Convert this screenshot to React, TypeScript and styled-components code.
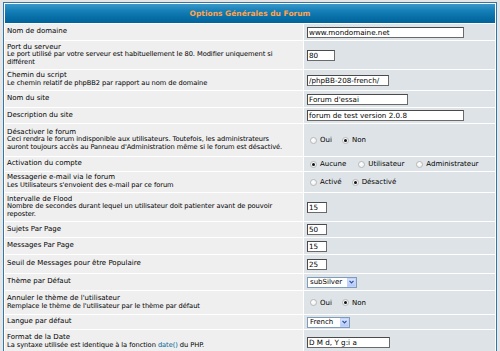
import React from "react";
import styled, { createGlobalStyle } from "styled-components";

const GlobalStyle = createGlobalStyle`
  body {
    margin: 2px 3px;
    background: #e5e5e5;
    font-family: "DejaVu Sans", Verdana, sans-serif;
  }
`;

const ForumLine = styled.div`
  display: grid;
  grid-template-columns: 298px 1fr;
  gap: 1px;
  padding: 1px;
  background: #ffffff;
  border: 1px solid #2f78a8;
  box-sizing: border-box;
  width: 494px;
`;

const HeaderCell = styled.div`
  grid-column: 1 / -1;
  height: 19px;
  display: flex;
  align-items: center;
  justify-content: center;
  background: linear-gradient(#3b97c8 0%, #1680b8 35%, #086ea6 70%, #00649c 100%);
  color: #ffa34f;
  font-size: 7.5px;
  font-weight: bold;
`;

const LabelCell = styled.div<{ $h: number }>`
  height: ${(p) => p.$h}px;
  background: #efefef;
  display: flex;
  flex-direction: column;
  justify-content: center;
  padding: 0 2px 0 2px;
  color: #000;
`;

const ValueCell = styled.div<{ $h: number }>`
  height: ${(p) => p.$h}px;
  background: #dee3e7;
  display: flex;
  align-items: center;
  padding-left: 3px;
`;

const Title = styled.span`
  font-size: 7px;
  line-height: 7.6px;
`;

const Explain = styled.span`
  font-size: 6.7px;
  line-height: 7.6px;
  letter-spacing: -0.07px;
`;

const Link = styled.a`
  color: #006699;
  text-decoration: none;
`;

const TextInput = styled.input<{ $w: number }>`
  width: ${(p) => p.$w}px;
  height: 11px;
  box-sizing: border-box;
  padding: 0 1px;
  border: 1px solid #4a4a4a;
  border-right-color: #6a6a6a;
  border-bottom-color: #6a6a6a;
  background: #fff;
  font: 7.2px "DejaVu Sans", Verdana, sans-serif;
  color: #000;
  outline: none;
`;

const RadioGroup = styled.div<{ $gap: number }>`
  display: flex;
  align-items: center;
  gap: ${(p) => p.$gap}px;
  padding-left: 3px;
`;

const RadioItem = styled.label`
  display: flex;
  align-items: center;
  gap: 3px;
  font-size: 7px;
  color: #000;
`;

const Dot = styled.span<{ $on: boolean }>`
  width: 7px;
  height: 7px;
  border-radius: 50%;
  box-sizing: border-box;
  border: 1px solid #b9b9b9;
  background: radial-gradient(circle at 35% 35%, #ffffff 0%, #ececec 100%);
  display: flex;
  align-items: center;
  justify-content: center;
  &::after {
    content: "";
    width: 3px;
    height: 3px;
    border-radius: 50%;
    background: ${(p) => (p.$on ? "#111" : "transparent")};
  }
`;

const SelectBox = styled.div<{ $w: number }>`
  width: ${(p) => p.$w}px;
  height: 11px;
  box-sizing: border-box;
  border: 1px solid #7f9db9;
  background: #fff;
  display: flex;
  align-items: center;
  justify-content: space-between;
  font-size: 7px;
  padding-left: 2px;
  color: #000;
`;

const ArrowBtn = styled.span`
  width: 9px;
  height: 9px;
  box-sizing: border-box;
  background: linear-gradient(#d8e4fe, #b5c9f7);
  border: 1px solid #c3d3fd;
  display: flex;
  align-items: center;
  justify-content: center;
`;

type Field = {
  title: string;
  explain?: React.ReactNode;
  h: number;
  value: React.ReactNode;
};

const Radios = ({ items, checked, gap }: { items: string[]; checked: number; gap: number }) => (
  <RadioGroup $gap={gap}>
    {items.map((t, i) => (
      <RadioItem key={t}>
        <Dot $on={i === checked} />
        {t}
      </RadioItem>
    ))}
  </RadioGroup>
);

const Select = ({ value, w }: { value: string; w: number }) => (
  <SelectBox $w={w}>
    {value}
    <ArrowBtn>
      <svg width="5" height="4" viewBox="0 0 5 4">
        <path d="M0.5 0.8 L2.5 2.8 L4.5 0.8" stroke="#2d4fa0" strokeWidth="1.2" fill="none" />
      </svg>
    </ArrowBtn>
  </SelectBox>
);

const fields: Field[] = [
  { title: "Nom de domaine", h: 16, value: <TextInput $w={157} defaultValue="www.mondomaine.net" /> },
  {
    title: "Port du serveur",
    explain: "Le port utilisé par votre serveur est habituellement le 80. Modifier uniquement si différent",
    h: 28,
    value: <TextInput $w={28} defaultValue="80" />,
  },
  {
    title: "Chemin du script",
    explain: "Le chemin relatif de phpBB2 par rapport au nom de domaine",
    h: 20,
    value: <TextInput $w={82} defaultValue="/phpBB-208-french/" />,
  },
  { title: "Nom du site", h: 16, value: <TextInput $w={101} defaultValue="Forum d'essai" /> },
  { title: "Description du site", h: 15, value: <TextInput $w={157} defaultValue="forum de test version 2.0.8" /> },
  {
    title: "Désactiver le forum",
    explain:
      "Ceci rendra le forum indisponible aux utilisateurs. Toutefois, les administrateurs auront\u00a0toujours accès au Panneau d'Administration même si le forum est désactivé.",
    h: 32,
    value: <Radios items={["Oui", "Non"]} checked={1} gap={10} />,
  },
  {
    title: "Activation du compte",
    h: 14,
    value: <Radios items={["Aucune", "Utilisateur", "Administrateur"]} checked={0} gap={12} />,
  },
  {
    title: "Messagerie e-mail via le forum",
    explain: "Les Utilisateurs s'envoient des e-mail par ce forum",
    h: 20,
    value: <Radios items={["Activé", "Désactivé"]} checked={1} gap={10} />,
  },
  {
    title: "Intervalle de Flood",
    explain: "Nombre de secondes durant lequel un utilisateur doit patienter avant de pouvoir reposter.",
    h: 28,
    value: <TextInput $w={20} defaultValue="15" />,
  },
  { title: "Sujets Par Page", h: 15, value: <TextInput $w={20} defaultValue="50" /> },
  { title: "Messages Par Page", h: 16, value: <TextInput $w={20} defaultValue="15" /> },
  { title: "Seuil de Messages pour être Populaire", h: 18, value: <TextInput $w={20} defaultValue="25" /> },
  { title: "Thème par Défaut", h: 16, value: <Select value="subSilver" w={50} /> },
  {
    title: "Annuler le thème de l'utilisateur",
    explain: "Remplace le thème de l'utilisateur par le thème par défaut",
    h: 23,
    value: <Radios items={["Oui", "Non"]} checked={1} gap={10} />,
  },
  { title: "Langue par défaut", h: 14, value: <Select value="French" w={43} /> },
  {
    title: "Format de la Date",
    explain: (
      <>
        La syntaxe utilisée est identique à la fonction <Link href="#">date()</Link> du PHP.
      </>
    ),
    h: 24,
    value: <TextInput $w={83} defaultValue="D M d, Y g:i a" />,
  },
];

const App: React.FC = () => {
  return (
    <div>
      <GlobalStyle />
      <ForumLine>
        <HeaderCell>Options Générales du Forum</HeaderCell>
        {fields.map((f) => (
          <React.Fragment key={f.title}>
            <LabelCell $h={f.h}>
              <Title>{f.title}</Title>
              {f.explain && <Explain>{f.explain}</Explain>}
            </LabelCell>
            <ValueCell $h={f.h}>{f.value}</ValueCell>
          </React.Fragment>
        ))}
      </ForumLine>
    </div>
  );
};

export default App;
